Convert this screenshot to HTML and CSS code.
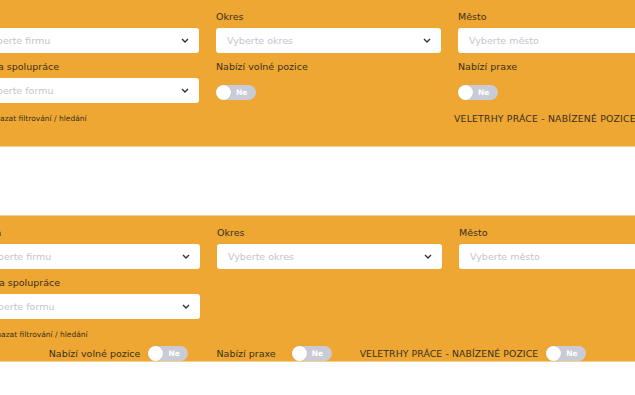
FILE: index.html
```html
<!DOCTYPE html>
<html lang="cs">
<head>
  <meta charset="UTF-8" />
  <meta name="viewport" content="width=device-width, initial-scale=1.0" />
  <title>Filtr firem</title>
  <link rel="stylesheet" href="styles.css">
</head>
<body>
  <!-- varianta 1 -->
  <div class="panel">
    <div class="filters">
      <div class="field">
        <label>Firma</label>
        <div class="select"><span>Vyberte firmu</span><svg class="chev" viewBox="0 0 8 5"><path d="M1 1l3 3 3-3"/></svg></div>
      </div>
      <div class="field">
        <label>Okres</label>
        <div class="select"><span>Vyberte okres</span><svg class="chev" viewBox="0 0 8 5"><path d="M1 1l3 3 3-3"/></svg></div>
      </div>
      <div class="field">
        <label>Město</label>
        <div class="select"><span>Vyberte město</span></div>
      </div>

      <div class="field">
        <label>Forma spolupráce</label>
        <div class="select"><span>Vyberte formu</span><svg class="chev" viewBox="0 0 8 5"><path d="M1 1l3 3 3-3"/></svg></div>
      </div>
      <div class="field">
        <label>Nabízí volné pozice</label>
        <div class="toggle toggle-low"><i></i><b>Ne</b></div>
      </div>
      <div class="field">
        <label>Nabízí praxe</label>
        <div class="toggle toggle-low"><i></i><b>Ne</b></div>
      </div>

      <a class="reset">Smazat filtrování / hledání</a>
      <div></div>
      <div class="fairs">VELETRHY PRÁCE - NABÍZENÉ POZICE</div>
    </div>
  </div>

  <div class="gap"></div>

  <!-- varianta 2 -->
  <div class="panel panel-two">
    <div class="filters">
      <div class="field">
        <label>Firma</label>
        <div class="select"><span>Vyberte firmu</span><svg class="chev" viewBox="0 0 8 5"><path d="M1 1l3 3 3-3"/></svg></div>
      </div>
      <div class="field">
        <label>Okres</label>
        <div class="select"><span>Vyberte okres</span><svg class="chev" viewBox="0 0 8 5"><path d="M1 1l3 3 3-3"/></svg></div>
      </div>
      <div class="field">
        <label>Město</label>
        <div class="select"><span>Vyberte město</span></div>
      </div>

      <div class="field">
        <label>Forma spolupráce</label>
        <div class="select"><span>Vyberte formu</span><svg class="chev" viewBox="0 0 8 5"><path d="M1 1l3 3 3-3"/></svg></div>
      </div>
      <div></div>
      <div></div>

      <a class="reset">Smazat filtrování / hledání</a>
    </div>
    <div class="switches">
      <div class="switch"><span>Nabízí volné pozice</span><div class="toggle"><i></i><b>Ne</b></div></div>
      <div class="switch switch-wide"><span>Nabízí praxe</span><div class="toggle"><i></i><b>Ne</b></div></div>
      <div class="switch"><span class="caps">VELETRHY PRÁCE - NABÍZENÉ POZICE</span><div class="toggle"><i></i><b>Ne</b></div></div>
    </div>
  </div>
</body>
</html>
```

FILE: styles.css
```css
body {
  margin: 0;
  font-family: "DejaVu Sans", sans-serif;
  background: #fff;
  color: #3a3020;
  overflow: hidden;
}
.panel {
  background: #eea732;
  border-bottom: 1px solid #f5cf8e;
  height: 147px;
  padding-top: 10px;
  box-sizing: border-box;
  overflow: hidden;
}
.panel-two {
  border-top: 1px solid #f5cf8e;
  height: 147px;
}
.gap {
  height: 68px;
}
.filters {
  display: grid;
  grid-template-columns: 225px 225px 225px;
  column-gap: 17px;
  margin-left: -26px;
  width: 709px;
}
.panel-two .filters {
  margin-left: -25px;
}
.field {
  margin-bottom: 7px;
}
label {
  display: block;
  font-size: 9.5px;
  line-height: 14px;
  margin-bottom: 4px;
  white-space: nowrap;
}
.select {
  height: 25px;
  background: #fff;
  border-radius: 3px;
  display: flex;
  align-items: center;
  justify-content: space-between;
  padding: 0 10px 0 11px;
  font-size: 9.5px;
  color: #c3c5ce;
}
.chev {
  width: 8px;
  height: 5px;
  fill: none;
  stroke: #333;
  stroke-width: 1.4;
}
.toggle {
  width: 40px;
  height: 15px;
  border-radius: 8px;
  background: #c9ccd6;
  position: relative;
  flex: none;
}
.toggle-low {
  margin-top: 11px;
}
.toggle i {
  position: absolute;
  left: 0;
  top: 0;
  width: 15px;
  height: 15px;
  border-radius: 50%;
  background: #fff;
  box-shadow: 0 0 1px rgba(0, 0, 0, 0.2);
}
.toggle b {
  position: absolute;
  left: 20px;
  top: 0;
  line-height: 15px;
  font-size: 7.5px;
  color: #fff;
}
.reset {
  font-size: 7.5px;
  line-height: 12px;
  padding-left: 14px;
  margin-top: 3px;
  white-space: nowrap;
}
.fairs {
  font-size: 9.3px;
  letter-spacing: 0.2px;
  line-height: 12px;
  margin-left: -4px;
  margin-top: 3px;
  white-space: nowrap;
}
.switches {
  display: flex;
  justify-content: center;
  gap: 28px;
  margin-top: 5px;
}
.switch {
  display: flex;
  align-items: center;
  gap: 8px;
  font-size: 9.5px;
  white-space: nowrap;
}
.switch-wide {
  gap: 16px;
}
.caps {
  font-size: 9.3px;
  letter-spacing: 0.1px;
}
```
